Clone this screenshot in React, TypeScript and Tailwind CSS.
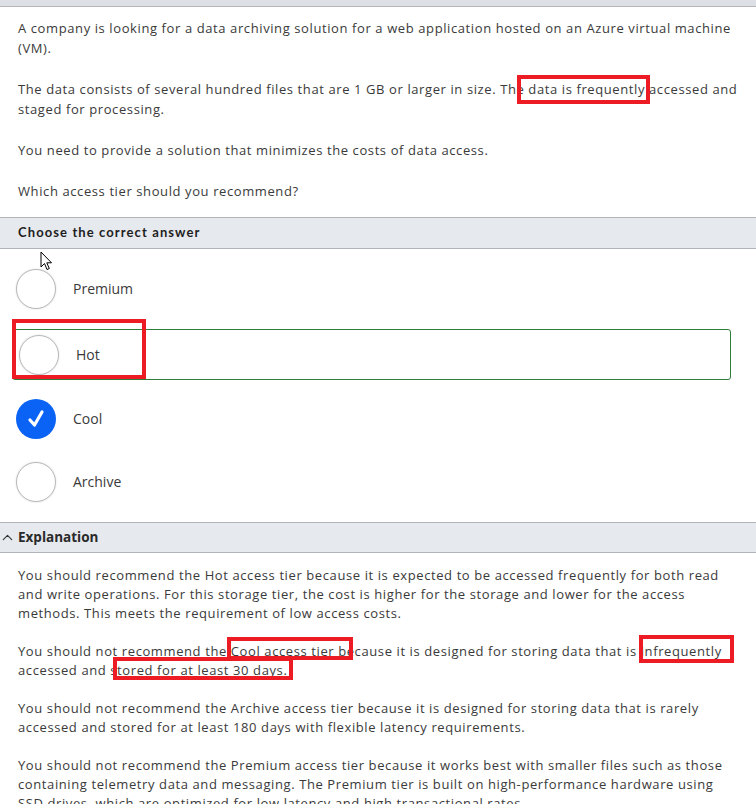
import { ChevronUp } from "lucide-react";

const options = [
  { label: "Premium", checked: false, marked: false, gap: "mb-[15px]" },
  { label: "Hot", checked: false, marked: true, gap: "mb-[13px]" },
  { label: "Cool", checked: true, marked: false, gap: "mb-[12px]" },
  { label: "Archive", checked: false, marked: false, gap: "" },
];

const Radio = ({ checked }: { checked: boolean }) =>
  checked ? (
    <div className="w-[40px] h-[40px] rounded-full bg-[#0b63f6] flex items-center justify-center shrink-0">
      <svg width="22" height="22" viewBox="0 0 22 22">
        <path d="M5 12 L9.5 17 L17 4" fill="none" stroke="white" strokeWidth="3.2" strokeLinecap="round" strokeLinejoin="round" />
      </svg>
    </div>
  ) : (
    <div className="w-[40px] h-[40px] rounded-full bg-white border border-[#b9b9b9] shadow-[0_0_2px_rgba(0,0,0,0.15)] shrink-0" />
  );

const RedBox = ({ className }: { className: string }) => (
  <div className={`absolute border-[4px] border-[#ed1c24] pointer-events-none ${className}`} />
);

export default function App() {
  return (
    <div
      className="relative w-[756px] h-[804px] overflow-hidden bg-white text-[#3a3a3a]"
      style={{ fontFamily: '"Open Sans", "Noto Sans", sans-serif' }}
    >
      <div className="h-[7px] bg-[#dcdfe3] border-b border-[#b5b5b5]" />

      <div className="pl-[18px] pr-[14px] pt-[11px] pb-[16px] text-[13px] leading-[20px] tracking-[0.6px]">
        <p className="mb-[21px]">
          A company is looking for a data archiving solution for a web application hosted on an Azure virtual machine
          (VM).
        </p>
        <p className="mb-[21px]">
          The data consists of several hundred files that are 1 GB or larger in size. The data is frequently accessed and
          staged for processing.
        </p>
        <p className="mb-[21px]">You need to provide a solution that minimizes the costs of data access.</p>
        <p>Which access tier should you recommend?</p>
      </div>

      <div className="h-[32px] bg-[#e6e9ed] border-y border-[#b0b3b8] flex items-center px-[18px]">
        <span
          className="text-[13px] font-bold tracking-[1.1px] text-[#1e1e1e]"
          style={{ fontFamily: "Lato, sans-serif" }}
        >
          Choose the correct answer
        </span>
      </div>

      <div className="pt-[14px] pb-[15px] flex flex-col">
        {options.map((o) => (
          <div
            key={o.label}
            className={`ml-[12px] w-[719px] h-[51px] flex items-center rounded-[3px] border ${o.gap} ${
              o.marked ? "border-[#2e7d3a]" : "border-transparent"
            }`}
          >
            <div className={o.marked ? "ml-[6px]" : "ml-[3px]"}>
              <Radio checked={o.checked} />
            </div>
            <span className="ml-[17px] text-[14px]">{o.label}</span>
          </div>
        ))}
      </div>

      <div className="h-[31px] bg-[#e6e9ed] border-y border-[#b0b3b8] flex items-center">
        <ChevronUp className="w-[17px] h-[17px] -ml-[1px] text-[#333]" strokeWidth={1.6} />
        <span className="ml-[2px] text-[13.5px] font-bold text-[#2a2a2a]">Explanation</span>
      </div>

      <div className="pl-[18px] pr-[14px] pt-[13px] text-[13px] leading-[19px] tracking-[0.6px]">
        <p className="mb-[19px]">
          You should recommend the Hot access tier because it is expected to be accessed frequently for both read
          and write operations. For this storage tier, the cost is higher for the storage and lower for the access
          methods. This meets the requirement of low access costs.
        </p>
        <p className="mb-[19px]">
          You should not recommend the Cool access tier because it is designed for storing data that is infrequently
          accessed and stored for at least 30 days.
        </p>
        <p className="mb-[19px]">
          You should not recommend the Archive access tier because it is designed for storing data that is rarely
          accessed and stored for at least 180 days with flexible latency requirements.
        </p>
        <p>
          You should not recommend the Premium access tier because it works best with smaller files such as those
          containing telemetry data and messaging. The Premium tier is built on high-performance hardware using
          SSD drives, which are optimized for low latency and high transactional rates.
        </p>
      </div>

      {/* annotations */}
      <RedBox className="left-[517px] top-[75px] w-[133px] h-[29px]" />
      <RedBox className="left-[12px] top-[319px] w-[134px] h-[60px]" />
      <RedBox className="left-[227px] top-[637px] w-[126px] h-[23px]" />
      <RedBox className="left-[639px] top-[635px] w-[95px] h-[28px]" />
      <RedBox className="left-[113px] top-[657px] w-[180px] h-[23px]" />

      <svg className="absolute left-[40px] top-[251px]" width="13" height="20" viewBox="0 0 13 20">
        <path d="M1 1 L1 16 L4.5 12.5 L7 18.5 L9.3 17.5 L6.8 11.8 L11.5 11.8 Z" fill="white" stroke="black" strokeWidth="1" strokeLinejoin="round" />
      </svg>
    </div>
  );
}
